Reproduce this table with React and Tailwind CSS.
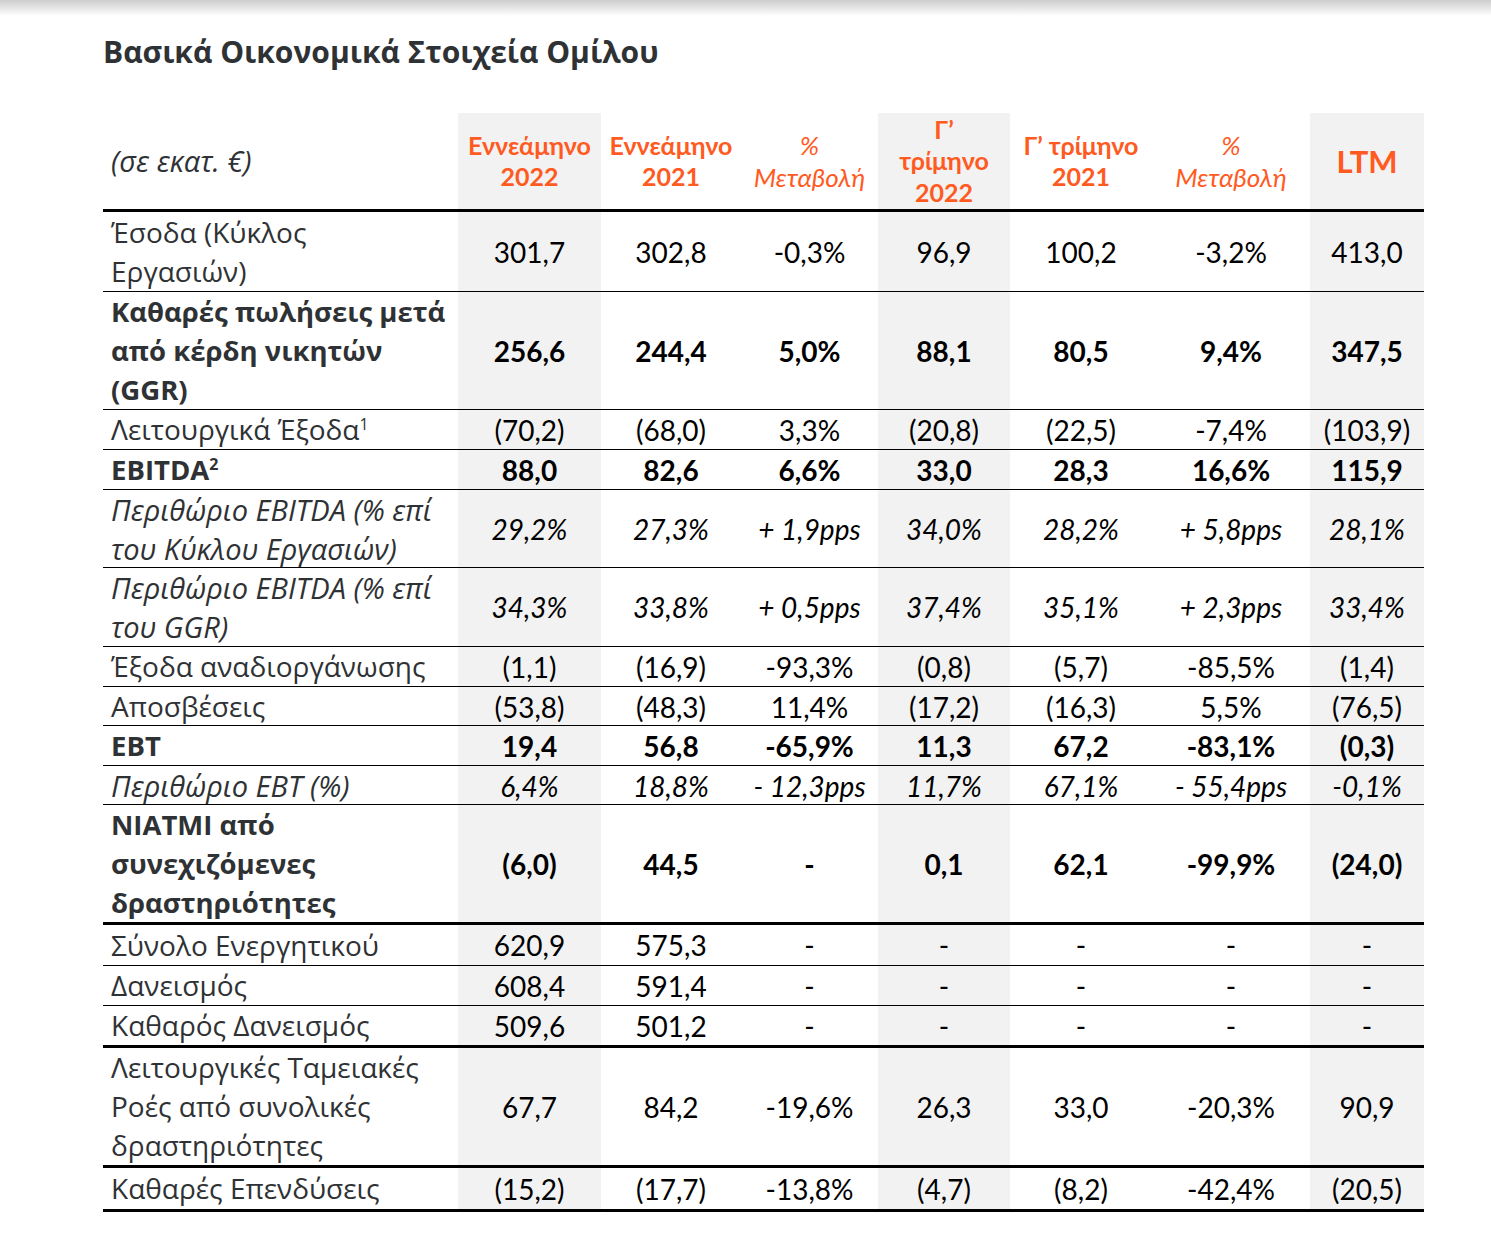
import React from "react";

const COLS = "grid grid-cols-[355px_143px_140px_137px_132px_142px_158px_114px]";
const GRAY = [0, 3, 6];

const rows = [
  { h: "h-[80px]", label: ["Έσοδα (Κύκλος", "Εργασιών)"], vals: ["301,7", "302,8", "-0,3%", "96,9", "100,2", "-3,2%", "413,0"] },
  { h: "h-[118px]", label: ["Καθαρές πωλήσεις μετά", "από κέρδη νικητών", "(GGR)"], bold: true, vals: ["256,6", "244,4", "5,0%", "88,1", "80,5", "9,4%", "347,5"] },
  { h: "h-[40px]", label: ["Λειτουργικά Έξοδα"], sup: "1", vals: ["(70,2)", "(68,0)", "3,3%", "(20,8)", "(22,5)", "-7,4%", "(103,9)"] },
  { h: "h-[40px]", label: ["EBITDA"], sup: "2", bold: true, vals: ["88,0", "82,6", "6,6%", "33,0", "28,3", "16,6%", "115,9"] },
  { h: "h-[78px]", label: ["Περιθώριο EBITDA (% επί", "του Κύκλου Εργασιών)"], italic: true, vals: ["29,2%", "27,3%", "+ 1,9pps", "34,0%", "28,2%", "+ 5,8pps", "28,1%"] },
  { h: "h-[79px]", label: ["Περιθώριο EBITDA (% επί", "του GGR)"], italic: true, vals: ["34,3%", "33,8%", "+ 0,5pps", "37,4%", "35,1%", "+ 2,3pps", "33,4%"] },
  { h: "h-[40px]", label: ["Έξοδα αναδιοργάνωσης"], vals: ["(1,1)", "(16,9)", "-93,3%", "(0,8)", "(5,7)", "-85,5%", "(1,4)"] },
  { h: "h-[39px]", label: ["Αποσβέσεις"], vals: ["(53,8)", "(48,3)", "11,4%", "(17,2)", "(16,3)", "5,5%", "(76,5)"] },
  { h: "h-[40px]", label: ["EBT"], bold: true, vals: ["19,4", "56,8", "-65,9%", "11,3", "67,2", "-83,1%", "(0,3)"] },
  { h: "h-[39px]", label: ["Περιθώριο EBT (%)"], italic: true, vals: ["6,4%", "18,8%", "- 12,3pps", "11,7%", "67,1%", "- 55,4pps", "-0,1%"] },
  { h: "h-[120px]", label: ["NIATMI από", "συνεχιζόμενες", "δραστηριότητες"], bold: true, thick: true, vals: ["(6,0)", "44,5", "-", "0,1", "62,1", "-99,9%", "(24,0)"] },
  { h: "h-[41px]", label: ["Σύνολο Ενεργητικού"], vals: ["620,9", "575,3", "-", "-", "-", "-", "-"] },
  { h: "h-[40px]", label: ["Δανεισμός"], vals: ["608,4", "591,4", "-", "-", "-", "-", "-"] },
  { h: "h-[42px]", label: ["Καθαρός Δανεισμός"], thick: true, vals: ["509,6", "501,2", "-", "-", "-", "-", "-"] },
  { h: "h-[120px]", label: ["Λειτουργικές Ταμειακές", "Ροές από συνολικές", "δραστηριότητες"], thick: true, vals: ["67,7", "84,2", "-19,6%", "26,3", "33,0", "-20,3%", "90,9"] },
  { h: "h-[44px]", label: ["Καθαρές Επενδύσεις"], thick: true, vals: ["(15,2)", "(17,7)", "-13,8%", "(4,7)", "(8,2)", "-42,4%", "(20,5)"] },
];

const headers = [
  { lines: ["Εννεάμηνο", "2022"] },
  { lines: ["Εννεάμηνο", "2021"] },
  { lines: ["%", "Μεταβολή"], light: true },
  { lines: ["Γ’", "τρίμηνο", "2022"] },
  { lines: ["Γ’ τρίμηνο", "2021"] },
  { lines: ["%", "Μεταβολή"], light: true },
  { lines: ["LTM"], big: true },
];

function Row({ r }) {
  const labelCls = [
    "pl-2 leading-[39px] text-[#2f3235] whitespace-nowrap flex flex-col justify-center",
    r.bold ? "font-bold text-[27.5px]" : r.italic ? "italic text-[29px]" : "text-[28px]",
  ].join(" ");
  return (
    <div className={`${COLS} ${r.h} overflow-hidden ${r.thick ? "border-b-[3px]" : "border-b"} border-black`}>
      <div className={labelCls} style={{ fontFamily: "'Open Sans', 'Noto Sans', sans-serif" }}>
        {r.label.map((l, i) => (
          <div key={i}>
            {l}
            {r.sup && i === r.label.length - 1 ? (
              <span className={`relative -top-[10px] text-[16px] leading-none ${r.bold ? "font-bold" : "font-normal"}`}>{r.sup}</span>
            ) : null}
          </div>
        ))}
      </div>
      {r.vals.map((v, i) => (
        <div
          key={i}
          className={`flex items-center justify-center text-[28px] leading-none text-black ${GRAY.includes(i) ? "bg-[#f2f2f2]" : ""} ${r.bold ? "font-bold" : ""} ${r.italic ? "italic" : ""}`}
          style={{ fontFamily: "Lato, 'Noto Sans', sans-serif" }}
        >
          {v}
        </div>
      ))}
    </div>
  );
}

export default function App() {
  return (
    <div className="w-[1491px] min-h-[1238px] bg-white">
      <div className="h-[16px] bg-gradient-to-b from-[#cdcdcd] to-white" />
      <div className="pl-[103px] pt-[14px]">
        <h1
          className="text-[30px] leading-[44px] font-bold text-[#2f3235]"
          style={{ fontFamily: "'Open Sans', 'Noto Sans', sans-serif" }}
        >
          Βασικά Οικονομικά Στοιχεία Ομίλου
        </h1>
        <div className="mt-[39px] w-[1321px]">
          <div className={`${COLS} h-[99px] border-b-[3px] border-black`}>
            <div
              className="flex items-center pl-2 text-[29px] italic text-[#2f3235]"
              style={{ fontFamily: "'Open Sans', 'Noto Sans', sans-serif" }}
            >
              (σε εκατ. €)
            </div>
            {headers.map((h, i) => (
              <div
                key={i}
                className={`flex flex-col items-center justify-center text-[#ff5a1f] ${GRAY.includes(i) ? "bg-[#f2f2f2]" : ""} ${
                  h.light ? "italic font-normal text-[26px] leading-[32px]" : h.big ? "font-bold text-[31px]" : "font-bold text-[25px] leading-[31.5px]"
                }`}
                style={{ fontFamily: "Lato, 'Noto Sans', sans-serif" }}
              >
                {h.lines.map((l, j) => (
                  <div key={j} className="whitespace-nowrap">{l}</div>
                ))}
              </div>
            ))}
          </div>
          {rows.map((r, i) => (
            <Row key={i} r={r} />
          ))}
        </div>
      </div>
    </div>
  );
}
